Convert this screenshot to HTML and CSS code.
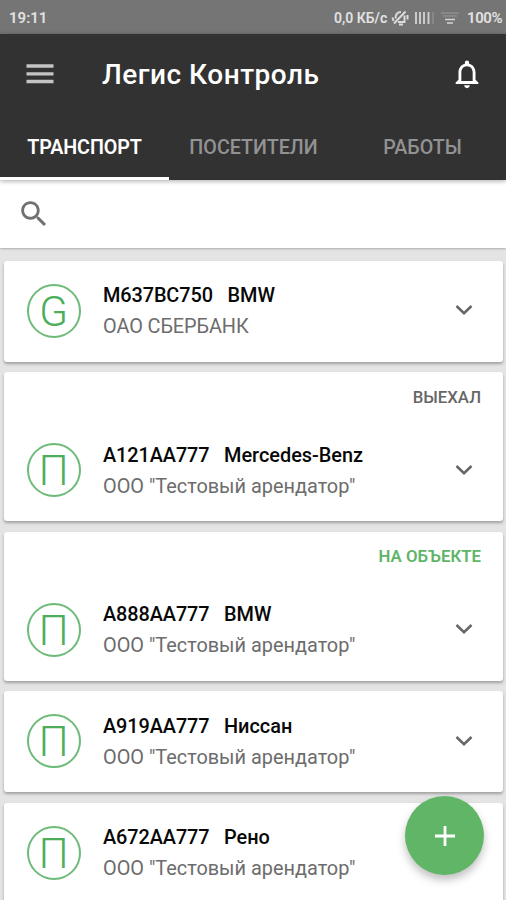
FILE: index.html
```html
<!DOCTYPE html>
<html lang="ru">
<head>
<meta charset="utf-8">
<title>Легис Контроль</title>
<link rel="stylesheet" href="styles.css">
</head>
<body>
<div class="screen">
  <div class="status">
    <span class="clock">19:11</span>
    <span class="speed">0,0 КБ/с</span>
    <svg class="mute" width="18" height="18" viewBox="0 0 18 18" fill="none" stroke="#dadada" stroke-width="2"><path d="M4.500 9.500C4.500 5 6.500 3 10 3M13.500 6.500V13H7M8 15.500h4M3 14.500 14.500 2.500M1.500 8.500l1 3.500M16.500 6v4.500"/></svg>
    <svg class="signal" width="20" height="14" viewBox="0 0 20 14"><path d="M1 1v12M5 1v12M9 1v12M13.500 1v12" stroke="#cfcfcf" stroke-width="1.900"/><path d="M18 1v12" stroke="#8b8b8b" stroke-width="1.700"/></svg>
    <svg class="wifi" width="18" height="14" viewBox="0 0 18 14"><path d="M0 2h18M2 5h14" stroke="#8f8f8f" stroke-width="1.500"/><path d="M4 8.500h10M6 12h6" stroke="#d4d4d4" stroke-width="1.700"/></svg>
    <span class="battery">100%</span>
  </div>
  <header class="appbar">
    <div class="toolbar">
      <svg class="menu" width="28" height="22" viewBox="0 0 28 22"><path d="M.5 3h27M.5 10.800h27M.5 18.500h27" stroke="#c4c4c4" stroke-width="3.300"/></svg>
      <h1 class="title">Легис Контроль</h1>
      <svg class="bell" width="34" height="34" viewBox="0 0 24 24" fill="#fff"><path d="M12 22c1.100 0 2-.9 2-2h-4c0 1.100.9 2 2 2zm6-6v-5c0-3.070-1.630-5.640-4.500-6.320V4c0-.83-.67-1.500-1.500-1.500s-1.500.67-1.500 1.500v.68C7.640 5.360 6 7.920 6 11v5l-2 2v1h16v-1l-2-2zm-2 1H8v-6c0-2.480 1.510-4.500 4-4.500s4 2.020 4 4.500v6z"/></svg>
    </div>
    <nav class="tabs">
      <span class="tab active">ТРАНСПОРТ</span>
      <span class="tab">ПОСЕТИТЕЛИ</span>
      <span class="tab works">РАБОТЫ</span>
    </nav>
  </header>
  <div class="search">
    <svg width="34" height="34" viewBox="0 0 24 24" fill="#707070"><path d="M15.500 14h-.79l-.28-.27C15.410 12.590 16 11.110 16 9.500 16 5.910 13.090 3 9.500 3S3 5.910 3 9.500 5.910 16 9.500 16c1.610 0 3.090-.59 4.230-1.570l.27.28v.79l5 4.990L20.490 19l-4.990-5zm-6 0C7.010 14 5 11.990 5 9.500S7.010 5 9.500 5 14 7.010 14 9.500 11.990 14 9.500 14z"/></svg>
  </div>
  <main class="list">
    <article class="card">
      <div class="row">
        <div class="avatar">G</div>
        <div class="info"><div class="name"><span class="plate wide">M637BC750</span><span>BMW</span></div><div class="company bank">ОАО СБЕРБАНК</div></div>
        <svg class="chevron" width="18" height="12" viewBox="0 0 18 12"><path d="M1.500 2 9 9.200 16.500 2"/></svg>
      </div>
    </article>
    <article class="card tall">
      <div class="state">ВЫЕХАЛ</div>
      <div class="row">
        <div class="avatar">П</div>
        <div class="info"><div class="name"><span class="plate">A121AA777</span><span>Mercedes-Benz</span></div><div class="company">ООО "Тестовый арендатор"</div></div>
        <svg class="chevron" width="18" height="12" viewBox="0 0 18 12"><path d="M1.500 2 9 9.200 16.500 2"/></svg>
      </div>
    </article>
    <article class="card tall">
      <div class="state present">НА ОБЪЕКТЕ</div>
      <div class="row">
        <div class="avatar">П</div>
        <div class="info"><div class="name"><span class="plate">A888AA777</span><span>BMW</span></div><div class="company">ООО "Тестовый арендатор"</div></div>
        <svg class="chevron" width="18" height="12" viewBox="0 0 18 12"><path d="M1.500 2 9 9.200 16.500 2"/></svg>
      </div>
    </article>
    <article class="card">
      <div class="row">
        <div class="avatar">П</div>
        <div class="info"><div class="name"><span class="plate">A919AA777</span><span>Ниссан</span></div><div class="company">ООО "Тестовый арендатор"</div></div>
        <svg class="chevron" width="18" height="12" viewBox="0 0 18 12"><path d="M1.500 2 9 9.200 16.500 2"/></svg>
      </div>
    </article>
    <article class="card">
      <div class="row">
        <div class="avatar">П</div>
        <div class="info"><div class="name"><span class="plate">A672AA777</span><span>Рено</span></div><div class="company">ООО "Тестовый арендатор"</div></div>
      </div>
    </article>
  </main>
  <button class="fab" aria-label="Добавить"><svg width="22" height="22" viewBox="0 0 22 22"><path d="M11 1v20M1 11h20" stroke="#fff" stroke-width="2.800"/></svg></button>
</div>
</body>
</html>
```

FILE: styles.css
```css
* { box-sizing: border-box; }
body { margin: 0; font-family: Roboto, "Liberation Sans", sans-serif; }
svg { display: block; flex: none; }
.screen { position: relative; width: 506px; height: 900px; overflow: hidden; background: #e4e4e4; display: flex; flex-direction: column; }
.status { height: 34px; flex: none; background: #757575; color: #e2e2e2; display: flex; align-items: center; padding: 1px 5px 0 9px; font-size: 15px; font-weight: 600; white-space: nowrap; }
.clock { flex: 1; }
.speed { width: 53px; font-size: 14px; }
.mute { margin-left: 4px; }
.signal { margin-left: 6px; }
.wifi { margin-left: 6px; }
.battery { margin-left: 8px; width: 34px; letter-spacing: -.4px; }
.appbar { position: relative; z-index: 2; height: 146px; flex: none; background: #323232; box-shadow: 0 1px 5px rgba(0,0,0,.35); }
.toolbar { height: 80px; display: flex; align-items: center; padding: 0 22px 0 26px; }
.title { flex: 1; margin: 2px 0 0 48px; font-size: 28px; font-weight: 500; line-height: 34px; letter-spacing: .5px; color: #fff; }
.menu { margin-top: -1px; }
.tabs { height: 66px; display: grid; grid-template-columns: 169px 169px 168px; }
.tab { display: flex; justify-content: center; padding-top: 22px; font-size: 19.700px; line-height: 24px; font-weight: 500; color: #929292; }
.works { padding-left: 1px; }
.active { color: #fff; border-bottom: 3px solid #fff; font-weight: 600; letter-spacing: -.1px; }
.search { height: 68px; flex: none; background: #fff; padding: 17px; box-shadow: 0 1px 2px rgba(0,0,0,.25); }
.list { padding: 12.500px 3px 0 4px; display: flex; flex-direction: column; gap: 10.500px; }
.card { height: 101px; flex: none; display: flex; flex-direction: column; justify-content: flex-end; background: #fff; border-radius: 3px; box-shadow: 0 2px 3px rgba(0,0,0,.3); }
.tall { height: 149px; }
.state { flex: 1; padding: 13.500px 22px 0 0; text-align: right; font-size: 16.800px; line-height: 22px; font-weight: 500; color: #666; }
.present { color: #5fb567; font-weight: 600; }
.row { height: 101px; display: flex; align-items: center; padding: 0 30px 1px 22.500px; }
.avatar { width: 54px; height: 54px; flex: none; border: 2px solid #6dbb78; border-radius: 50%; color: #4cae5a; font-size: 42px; font-weight: 300; line-height: 51px; text-align: center; }
.info { flex: 1; margin-left: 22.500px; padding-top: 2px; white-space: nowrap; }
.name { display: flex; font-size: 19.900px; line-height: 30px; font-weight: 500; color: #080808; }
.plate { width: 121px; letter-spacing: -.1px; }
.wide { width: 124.500px; }
.company { font-size: 19.900px; line-height: 31px; color: #6c6c6c; }
.bank { letter-spacing: -.1px; }
.chevron { margin-top: -1px; fill: none; stroke: #666; stroke-width: 2.500; }
.fab { position: absolute; left: 405px; top: 796px; width: 79px; height: 79px; border: 0; padding: 0; border-radius: 50%; background: #60b666; display: flex; align-items: center; justify-content: center; box-shadow: 0 5px 9px rgba(0,0,0,.25); }
```
